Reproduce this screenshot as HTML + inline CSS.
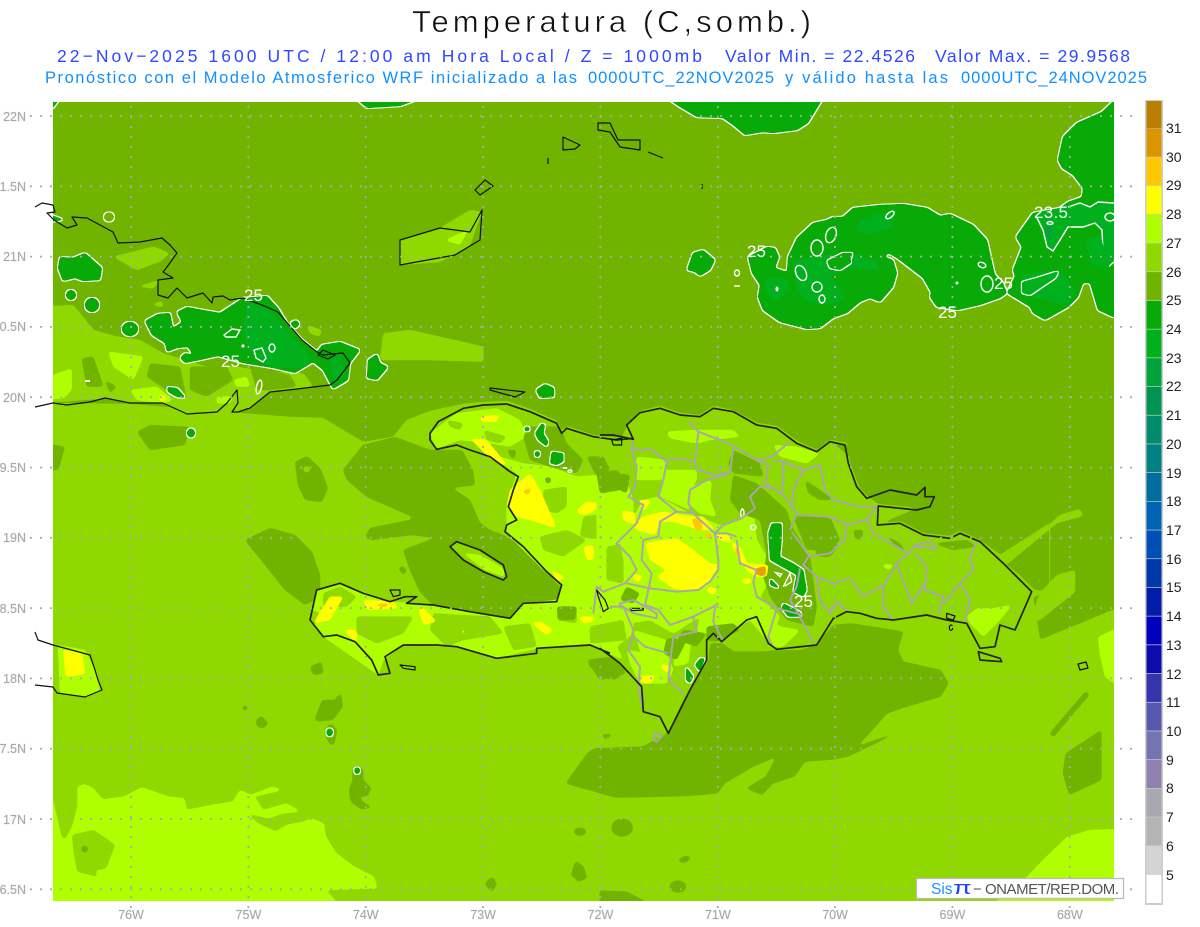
<!DOCTYPE html>
<html><head><meta charset="utf-8"><style>
html,body{margin:0;padding:0;background:#fff;width:1200px;height:927px;overflow:hidden}
svg{display:block;position:absolute;left:0;top:0}
text{font-family:"Liberation Sans",sans-serif}
.d{fill:#70b400}.l{fill:#8fd800}.b{fill:#b0ff00}.y{fill:#ffff00}.o{fill:#e8a000}.p{fill:#ffc800}
.g{fill:#08aa08}.h{fill:#00b01c}
.d,.l,.b,.y,.o,.p,.h{filter:url(#sm)}
.z .d,.z .l,.z .b,.z .y,.z .o,.z .p,.z .h{filter:url(#sz)}
.c{filter:url(#cs)}
.z .c{filter:url(#csz)}
.cn{fill:none;stroke:#fff;stroke-width:1.4;vector-effect:non-scaling-stroke}
.k{fill:none;stroke:#111;stroke-width:1.2;stroke-linejoin:round;vector-effect:non-scaling-stroke}
.k2{fill:none;stroke:#222;stroke-width:1.7;stroke-linejoin:round;vector-effect:non-scaling-stroke}
.v{fill:none;stroke:#a8a8a8;stroke-width:2;stroke-linejoin:round;vector-effect:non-scaling-stroke}
.gr{stroke:#aaa;stroke-width:1.8;stroke-dasharray:2 8;fill:none}
.ax{fill:#aaa;font-size:12.5px;stroke:#aaa;stroke-width:.2}
.cb{fill:#222;font-size:14px}
</style></head><body>
<svg width="1200" height="927" viewBox="0 0 1200 927" xmlns="http://www.w3.org/2000/svg">
<defs>
<clipPath id="m"><rect x="53" y="102" width="1061" height="799"/></clipPath>
<filter id="sm" x="-50%" y="-100%" width="200%" height="300%" color-interpolation-filters="sRGB">
<feGaussianBlur stdDeviation="1.6"/><feComponentTransfer><feFuncA type="linear" slope="9" intercept="-3.5"/></feComponentTransfer>
</filter>
<filter id="sz" x="-50%" y="-100%" width="200%" height="300%" color-interpolation-filters="sRGB">
<feGaussianBlur stdDeviation="4.8"/><feComponentTransfer><feFuncA type="linear" slope="9" intercept="-3.5"/></feComponentTransfer>
</filter>
<filter id="cs" x="-50%" y="-60%" width="200%" height="220%" color-interpolation-filters="sRGB">
<feGaussianBlur in="SourceGraphic" stdDeviation="1.3"/><feComponentTransfer result="sh"><feFuncA type="linear" slope="9" intercept="-3.5"/></feComponentTransfer>
<feMorphology in="sh" operator="dilate" radius="1" result="di"/>
<feFlood flood-color="#fff"/><feComposite in2="di" operator="in" result="w"/>
<feMerge><feMergeNode in="w"/><feMergeNode in="sh"/></feMerge>
</filter>
<filter id="csz" x="-50%" y="-60%" width="200%" height="220%" color-interpolation-filters="sRGB">
<feGaussianBlur in="SourceGraphic" stdDeviation="3"/><feComponentTransfer result="sh"><feFuncA type="linear" slope="9" intercept="-3.5"/></feComponentTransfer>
<feMorphology in="sh" operator="dilate" radius="3" result="di"/>
<feFlood flood-color="#fff"/><feComposite in2="di" operator="in" result="w"/>
<feMerge><feMergeNode in="w"/><feMergeNode in="sh"/></feMerge>
</filter>
</defs>

<text x="412" y="32" font-size="31" textLength="399" lengthAdjust="spacing" fill="#111" stroke="#fff" stroke-width=".5">Temperatura (C,somb.)</text>
<g font-size="17.5" fill="#3048ff">
<text x="57" y="62" textLength="645" lengthAdjust="spacing">22−Nov−2025 1600 UTC / 12:00 am Hora Local / Z = 1000mb</text>
<text x="725" y="62" textLength="190" lengthAdjust="spacing">Valor Min. = 22.4526</text>
<text x="935" y="62" textLength="195" lengthAdjust="spacing">Valor Max. = 29.9568</text>
</g>
<g font-size="16.5" fill="#1090ff">
<text x="45" y="83" textLength="532" lengthAdjust="spacing">Pronóstico con el Modelo Atmosferico WRF inicializado a las</text>
<text x="588" y="83" textLength="186" lengthAdjust="spacing">0000UTC_22NOV2025</text>
<text x="785" y="83" textLength="163" lengthAdjust="spacing">y válido hasta las</text>
<text x="961" y="83" textLength="186" lengthAdjust="spacing">0000UTC_24NOV2025</text>
</g>

<g clip-path="url(#m)">
<rect x="53" y="102" width="1061" height="799" fill="#70b400"/>

<!-- main light ocean -->
<polygon class="l" points="40,403 130,404 200,410 290,417 323,418 363,442 393,437 407,420 430,411 463,404 483,402 507,401 530,409 557,421 562,431 567,426 593,435 617,438 627,425 640,411 660,406 680,413 700,415 713,406 733,410 757,423 777,426 797,441 817,450 830,440 847,443 850,463 859,487 867,496 878,504 917,508 877,525 900,521 923,533 950,536 960,531 980,540 1000,555 1050,523 1050,590 1033,597 1040,640 1113,610 1130,605 1130,915 40,915"/>
<polygon class="d" points="1004,562 1030,543 1049,528 1049,590 1035,590 1020,575"/>
<polygon class="l" points="1000,557 1040,533 1060,515 1080,509 1083,516 1057,523 1040,537 1006,565"/>
<polygon class="l" points="1040,593 1057,575 1075,570 1075,592 1040,620 1030,622"/>
<polygon class="b" points="1098,637 1113,630 1125,625 1125,690 1105,677 1100,655"/>
<polygon class="b" points="1125,829 1090,830 1067,837 1043,860 1027,877 997,901 990,915 1125,915"/>

<!-- dark south -->
<g class="z" transform="translate(530 620) scale(.35714 .33333)">
<polygon class="d" points="505,70 540,70 570,95 660,95 680,92 760,90 800,75 850,15 900,10 1045,35 1030,90 1045,125 1150,150 1172,190 1150,230 1040,265 1000,280 950,340 915,380 1050,328 890,410 850,418 770,425 740,470 680,490 650,525 605,505 660,470 690,410 625,440 545,490 525,520 440,528 240,533 100,490 160,400 180,385 315,380 385,340 430,240 500,120"/>
<polygon class="d" points="160,130 200,115 240,130 270,150 240,178 200,175"/>
<polygon class="d" points="195,345 235,340 215,357"/>
<ellipse class="d" cx="258" cy="623" rx="30" ry="27"/>
<ellipse class="d" cx="140" cy="635" rx="17" ry="12"/>
<ellipse class="d" cx="433" cy="718" rx="17" ry="9" transform="rotate(-20 433 718)"/>
<polygon class="d" points="128,722 150,740 160,775 135,785 115,765"/>
<ellipse class="d" cx="414" cy="800" rx="23" ry="18"/>
<polygon class="d" points="195,812 270,815 320,842 320,870 195,870"/>
<polygon class="d" points="1455,340 1555,215 1568,222 1465,352"/>
<polygon class="d" points="1600,330 1500,400 1492,460 1510,525 1600,480"/>
</g>

<!-- Gulf dark -->
<polygon class="d" points="343,470 363,445 395,437 430,450 462,450 473,470 475,485 452,488 470,500 480,523 490,530 503,535 523,547 547,572 562,590 557,602 523,603 510,618 470,612 433,605 420,592 410,570 403,550 435,538 413,535 371,540 365,537 370,528 410,520 413,517 390,507 367,497 347,480"/>
<polygon class="l" points="450,547 457,542 480,550 503,565 507,577 503,580 483,572 463,560"/>
<polygon class="b" points="463,553 480,555 503,568 505,577 485,570"/>

<!-- other dark patches -->
<polygon class="d" points="295,462 307,456 320,468 328,488 322,502 305,500 298,485"/>
<polygon class="l" points="303,467 310,466 310,472 304,472"/>
<polygon class="d" points="137,432 150,425 190,427 185,445 150,450"/>
<polygon class="d" points="40,442 65,447 58,470 40,470"/>
<polygon class="d" points="245,540 270,528 295,535 312,552 320,575 320,597 305,605 285,590 265,565"/>
<polygon class="d" points="398,568 403,566 407,571 403,575"/>

<!-- SW region -->
<g class="z" transform="translate(40 680) scale(.35714 .33333)">
<polygon class="b" points="0,360 36,360 60,470 70,480 90,440 105,380 105,320 125,312 150,325 175,358 235,350 285,322 360,350 405,355 410,390 480,375 540,365 560,330 590,345 650,320 680,330 600,350 625,390 690,370 730,395 680,400 640,415 580,400 610,430 660,455 690,435 740,425 760,415 795,430 800,470 830,520 880,560 935,590 945,625 800,630 830,665 830,720 0,720"/>
<polygon class="l" points="90,465 150,450 210,495 185,565 155,570 160,590 105,575 95,520"/>
<circle class="d" cx="125" cy="507" r="10"/>
<polygon class="d" points="770,115 790,60 825,60 842,38 848,80 820,120 775,125"/>
<polygon class="d" points="605,120 620,108 640,130 622,147 605,135"/>
<ellipse class="d" cx="574" cy="84" rx="9" ry="7"/>
<polygon class="d" points="800,145 815,130 832,150 825,190 815,198 798,165"/>
<polygon class="d" points="875,270 890,255 905,270 905,300 928,325 915,350 890,350 915,375 938,380 900,388 870,365 865,330 875,300"/>
<polygon class="d" points="1245,610 1265,590 1280,610 1265,638"/>
<polygon class="d" points="1495,450 1525,450 1510,467"/>
<polygon class="d" points="1490,575 1500,540 1530,590 1515,605"/>
<ellipse class="g c" cx="811" cy="157" rx="9" ry="12"/>
<ellipse class="g c" cx="888" cy="272" rx="8" ry="10"/>
</g>
<path d="M1040,0" fill="none"/>

<!-- Cuba S band -->
<g class="z" transform="translate(30 190) scale(.33333)">
<polygon class="l" points="30,350 130,345 190,420 260,440 330,450 400,490 530,530 620,530 700,545 820,550 850,590 800,597 720,605 660,655 625,665 560,665 470,672 400,640 300,638 225,625 30,640"/>
<polygon class="d" points="155,505 190,500 220,590 170,590"/><polygon class="d" points="225,570 260,590 240,610"/>
<polygon class="d" points="480,530 590,530 610,570 530,620 480,600"/><polygon class="d" points="360,520 450,530 470,630 410,600 350,560"/>
<polygon class="d" points="660,530 780,555 800,590 720,600 680,600"/>
<polygon class="b" points="235,485 340,500 310,570 250,530"/><polygon class="b" points="30,570 125,535 125,600 100,625 30,630"/>
<polygon class="b" points="300,600 380,590 430,630 400,640 320,630"/><polygon class="b" points="610,570 650,560 660,590 620,590"/>
<polygon class="b" points="560,620 610,620 600,640 560,640"/>
<polygon class="y" points="388,612 408,620 404,636 388,630"/>
<polygon class="l" points="250,200 370,170 420,190 390,215 320,240"/>
<polygon class="l" points="320,290 390,270 370,295"/>
<polygon class="l" points="365,345 395,332 402,352"/>
<polygon class="l" points="830,405 875,420 870,440 840,430"/>
<polygon class="l" points="1060,430 1140,420 1360,470 1360,515 1190,510 1050,510"/>
</g>

<polygon class="l" points="400,240 440,228 470,210 482,212 470,245 440,262 400,265"/>
<polygon class="b" points="445,240 468,230 460,245"/>

<!-- Jamaica -->
<polygon class="b" points="58,645 85,650 95,670 100,690 85,697 60,693"/>
<polygon class="y" points="63,650 82,652 85,674 66,677"/>

<!-- Green top -->
<polygon class="g c" points="40,90 66,90 53,108 40,110"/>
<polygon class="g c" points="352,95 367,108 400,106 430,95"/>
<polygon class="g c" points="655,90 680,107 697,117 723,118 733,125 745,135 763,132 773,133 797,130 808,123 828,90"/>
<polygon class="g c" points="748,257 767,247 775,248 779,257 775,268 787,272 788,257 797,238 813,223 827,220 833,217 843,217 853,208 880,205 903,204 927,208 940,216 950,214 973,225 987,240 993,267 995,275 1003,283 1007,293 1000,298 980,305 958,310 937,307 930,297 931,292 923,278 910,268 897,258 888,253 885,257 893,260 897,273 893,287 880,302 870,298 860,302 847,313 833,318 820,328 807,329 780,322 763,310 758,297 760,285 752,273"/>
<polygon class="h" points="858,222 885,212 895,215 890,228 868,235 858,230"/>
<polygon class="h" points="765,280 785,277 790,290 775,302 765,292"/>
<polygon class="h" points="795,262 820,255 850,255 875,262 880,270 850,268 830,275 845,300 823,305 805,300 795,285"/>
<polygon class="g c" points="1130,85 1102,112 1077,123 1063,137 1058,160 1062,168 1073,175 1083,188 1082,197 1068,202 1060,208 1033,213 1023,227 1016,237 1022,247 1013,270 1015,276 1007,293 1030,307 1033,313 1045,320 1068,307 1078,297 1083,283 1090,283 1098,310 1113,317 1130,318"/>
<polygon class="h" points="1033,213 1068,207 1080,203 1090,207 1098,202 1125,203 1125,255 1107,268 1100,265 1103,253 1102,230 1095,223 1083,227 1068,227 1060,240 1053,251 1047,247 1043,230"/>
<polyline class="cn" points="1068,207 1080,203 1090,207 1098,202 1114,203"/>
<polyline class="cn" points="1036,216 1043,230 1047,247 1053,251 1060,240 1068,227 1083,227 1095,223 1102,230 1103,253 1100,265 1107,268 1114,262"/>
<polygon class="h" points="1020,275 1060,270 1075,290 1068,305 1030,296"/>
<polygon class="h" points="1085,240 1100,235 1110,270 1092,265"/>
<polygon fill="#08a040" points="1045,228 1052,225 1052,238 1047,238"/>

<!-- West blobs -->
<polygon class="g c" points="60,257 73,258 85,253 102,268 100,280 83,281 75,278 63,281 58,268"/>
<circle class="g c" cx="71" cy="295" r="5"/>
<ellipse class="g c" cx="92" cy="305" rx="7" ry="7"/>
<ellipse class="g c" cx="130" cy="329" rx="8" ry="7"/>
<ellipse class="d c" cx="109" cy="217" rx="5" ry="4.5"/>
<polygon class="g c" points="45,213 65,220 45,222"/>
<polygon class="g c" points="145,321 158,314 170,313 173,328 182,322 177,312 187,307 203,310 220,313 243,298 267,296 278,308 287,323 293,330 302,340 317,352 322,345 340,342 360,350 350,363 348,380 333,389 323,370 313,362 295,373 273,368 243,363 218,356 200,360 185,363 180,358 185,353 193,355 188,347 177,348 167,352 165,343 152,335 148,327"/>
<polygon class="h" points="247,303 270,310 283,327 310,357 307,367 270,367 250,353 243,333"/>
<polygon class="h" points="330,360 340,355 345,375 335,385"/>
<polygon class="g c" points="368,360 377,354 380,363 388,367 377,380 367,378"/>
<polygon class="g c" points="290,323 296,320 300,324 295,329"/>
<polygon class="cn" points="224,335 232,329 240,330 236,337 226,337"/>
<polygon class="cn" points="254,350 262,348 266,358 263,362 256,358"/>
<ellipse class="cn" cx="272" cy="348" rx="3" ry="4"/>
<circle cx="243" cy="346" r="1.6" fill="#fff"/>
<polygon class="g c" points="167,387 177,388 186,398 177,397 168,392"/>
<ellipse class="cn" cx="259" cy="387" rx="2.5" ry="7" transform="rotate(12 259 387)"/>
<rect x="85" y="380" width="5" height="2" fill="#fff"/>
<ellipse class="g c" cx="191" cy="433" rx="4" ry="4.5"/>
<polygon class="g c" points="536,390 545,384 554,388 554,397 540,398"/>

<!-- East little -->
<polygon class="g c" points="687,270 693,253 703,250 715,260 710,270 700,276 695,272"/>
<ellipse class="cn" cx="737" cy="273" rx="2.5" ry="3"/>
<path class="cn" d="M734,286h6"/>
<ellipse class="cn" cx="890" cy="215" rx="5" ry="2.5" transform="rotate(-40 890 215)"/>
<ellipse class="cn" cx="831" cy="235" rx="5" ry="8" transform="rotate(20 831 235)"/>
<ellipse class="cn" cx="817" cy="248" rx="6" ry="8"/>
<polygon class="g c" points="827,261 843,253 853,253 850,260 852,262 840,270 830,268"/>
<ellipse class="cn" cx="801" cy="273" rx="5" ry="8" transform="rotate(-25 801 273)"/>
<ellipse class="cn" cx="817" cy="287" rx="5" ry="5" transform="rotate(30 817 287)"/>
<ellipse class="cn" cx="822" cy="299" rx="3" ry="4"/>
<ellipse cx="777" cy="289" rx="1.5" ry="2.5" fill="#fff"/>
<circle cx="957" cy="283" r="1.5" fill="#fff"/>
<ellipse class="cn" cx="982" cy="265" rx="4" ry="2.5" transform="rotate(20 982 265)"/>
<ellipse class="cn" cx="987" cy="284" rx="6" ry="8"/>
<polygon class="h c" style="fill:#00b01c" points="1022,282 1037,278 1059,271 1055,278 1040,288 1030,295 1022,293"/>
<ellipse class="cn" cx="1050" cy="223" rx="3" ry="1.5"/>
<ellipse class="cn" cx="1110" cy="217" rx="5" ry="4"/>

<!-- HAITI LAND -->
<g class="z" transform="translate(290 400) scale(.33333)">
<polygon class="b" points="420,100 500,40 620,25 690,60 710,110 660,140 600,130 510,120 440,145"/>
<polygon class="b" points="590,160 700,190 780,200 860,230 1000,220 1030,300 1030,700 980,740 1000,780 900,735 740,745 620,775 500,740 340,735 280,780 265,825 100,710 60,660 80,570 150,550 300,605 440,615 660,655 700,610 800,600 815,555 760,510 650,400 650,320 680,220"/>
<polygon class="l" points="470,60 520,70 510,90 480,80"/>
<polygon class="l" points="580,90 650,110 630,130 590,120"/>
<polygon class="l" points="200,650 370,650 340,700 260,730 200,700"/>
<polygon class="l" points="430,640 600,650 640,700 520,720 470,740 420,690"/>
<polygon class="l" points="640,680 720,670 740,740 670,750"/>
<polygon class="l" points="810,620 860,620 860,670 800,660"/>
<polygon class="l" points="900,680 1000,660 1010,720 900,730"/>
<polygon class="l" points="750,410 830,390 890,420 820,470 760,450"/>
<polygon class="l" points="760,270 830,260 830,320 800,340 760,330"/>
<polygon class="l" points="880,350 960,340 950,420 870,410"/>
<polygon class="l" points="950,440 1000,430 1000,550 950,540"/>
<polygon class="l" points="100,580 150,560 200,590 170,620 100,620"/>
<polygon class="l" points="40,620 90,640 70,680"/>
<polygon class="d" points="890,780 970,770 1010,820 930,840"/>
<polygon class="d" points="60,800 95,785 100,820 70,825"/>
<polygon class="d" points="720,80 810,80 830,130 880,180 860,220 780,200 720,180 700,110"/>
<polygon class="d" points="890,170 940,170 960,210 920,230"/>
<polygon class="d" points="980,220 1020,225 1010,280 970,260"/>
<polygon class="d" points="800,620 860,620 855,660 805,660"/>
<polygon class="d" points="650,150 680,150 670,180"/>
<polygon class="d" points="765,230 785,235 780,250 768,250"/>
<polygon class="y" points="660,270 720,220 750,270 800,385 720,360 680,350 650,320"/>
<polygon class="y" points="540,115 590,120 655,200 600,175"/>
<polygon class="y" points="570,50 630,45 620,65 575,65"/>
<polygon class="y" points="645,90 670,100 660,105"/>
<polygon class="y" points="860,330 890,305 940,310 900,340 870,345"/>
<polygon class="y" points="880,440 910,435 910,480 890,480"/>
<polygon class="y" points="780,510 825,530 805,545"/>
<polygon class="y" points="70,670 120,590 160,590 120,660"/>
<polygon class="y" points="160,690 200,690 200,730"/>
<polygon class="y" points="385,625 400,625 440,665 400,675"/>
<polygon class="y" points="725,670 750,665 790,690 770,705"/>
<polygon class="y" points="865,650 915,650 910,665 880,670"/>
<polygon class="y" points="510,690 525,690 525,705"/>
<polygon class="y" points="705,700 725,715 720,720"/>
<polygon class="y" points="220,600 310,605 325,625 230,630"/>
<polygon class="y" points="995,330 1040,340 1040,375 1010,365"/>
<polygon class="p" points="240,612 300,610 285,622"/>
<polygon class="p" points="695,275 725,262 715,285"/>
<polygon class="g c" points="735,100 755,70 765,75 760,100 775,125 770,140 745,120"/>
<polygon class="g c" points="785,155 820,160 820,185 800,195 780,190"/>
<ellipse class="g c" cx="742" cy="162" rx="8" ry="9"/>
<ellipse class="g c" cx="711" cy="87" rx="8" ry="7"/>
</g>
<ellipse fill="#fff" cx="565" cy="468" rx="2.5" ry="1"/>
<ellipse class="cn" cx="570" cy="471" rx="2" ry="1.2"/>

<!-- DR LAND -->
<g class="z" transform="translate(600 400) scale(.33333)">
<polygon class="d" points="-10,220 50,210 85,250 60,270 0,280"/>
<polygon class="b" points="130,300 175,290 270,340 370,380 430,350 460,330 470,420 500,470 510,540 480,590 540,650 520,700 500,720 450,660 400,690 360,725 330,700 290,700 300,650 220,700 150,660 90,670 50,600 80,520 60,430 100,350"/>
<polygon class="b" points="200,95 290,90 400,90 420,110 330,120 290,130 210,115"/>
<polygon class="b" points="520,135 590,140 660,160 620,190 540,170"/>
<polygon class="b" points="110,170 200,180 185,240 105,240"/>
<polygon class="b" points="190,210 290,210 290,240 265,280 270,330 180,290"/>
<polygon class="b" points="270,260 335,240 330,300 350,350 300,340 265,310"/>
<polygon class="b" points="80,750 205,770 220,810 200,850 120,850 90,790"/>
<polygon class="b" points="1100,650 1130,625 1180,625 1235,615 1200,660 1150,710 1110,670"/>
<polygon class="b" points="500,650 540,680 600,690 550,740 510,740"/>
<polygon class="b" points="-10,290 50,290 90,340 60,420 -10,430"/>
<polygon class="b" points="100,690 200,720 210,770 130,780"/>
<polygon class="b" points="235,700 275,710 265,790 220,800"/>

<polygon class="d" points="400,225 470,250 560,330 575,380 630,470 650,620 640,680 560,660 510,590 490,530 500,460 480,360 420,340 390,300"/>
<polygon class="d" points="580,350 690,350 720,420 690,450 620,450"/>
<polygon class="d" points="400,150 480,190 490,230 400,220 385,190"/>
<polygon class="d" points="60,30 90,60 60,120 30,80"/>
<polygon class="d" points="320,680 400,670 420,690 350,725 320,720"/>
<polygon class="d" points="615,240 660,270 700,300 660,300 625,280"/>
<polygon class="d" points="640,400 690,410 715,440 690,470 650,470"/>
<polygon class="d" points="820,150 830,200 775,220 750,170 700,130"/>
<polygon class="d" points="760,390 790,390 785,420 765,415"/>
<polygon class="d" points="850,400 900,430 925,460 880,430"/>
<polygon class="d" points="250,690 320,700 290,740 230,720"/>
<polygon class="d" points="1000,430 1100,420 1130,440 1060,450"/>
<polygon class="d" points="80,560 120,580 100,610 60,600"/>
<polygon class="d" points="200,715 260,720 230,780 190,760"/>
<polygon class="b" points="850,493 878,493 874,507 852,505"/>

<polygon class="y" points="135,430 190,420 230,415 280,450 330,490 360,495 340,520 320,560 265,575 220,565 170,530 200,510 150,480"/>
<polygon class="y" points="100,375 130,350 190,335 240,345 280,350 310,350 345,390 300,390 220,365 180,365 165,405 110,390"/>
<polygon class="y" points="390,420 420,440 440,490 505,495 500,530 465,530 440,510 410,465"/>
<polygon class="y" points="115,300 155,300 130,335"/>
<polygon class="y" points="65,330 105,340 105,375 70,360"/>
<polygon class="y" points="120,830 165,825 155,850 125,850"/>
<polygon class="y" points="180,790 210,800 205,820 190,810"/>
<polygon class="y" points="345,400 385,405 395,430 360,420"/>
<polygon class="y" points="100,520 130,530 115,545 100,540"/>
<polygon class="y" points="325,560 350,565 345,585 320,575"/>
<polygon class="y" points="425,535 455,535 450,552 430,552"/>
<polygon class="p" points="275,355 302,355 308,390 288,393"/>
<polygon class="p" points="308,396 338,402 325,418"/>
<polygon class="o" points="462,508 497,497 497,527 475,527"/>
<polygon class="p" points="400,420 423,468 410,468"/>

<polygon class="g c" points="515,370 545,370 545,420 540,470 580,490 610,510 620,570 610,590 580,575 590,525 545,500 510,480 505,400"/>
<polygon class="g c" points="510,535 535,560 535,565 510,555"/>
<polygon class="g c" points="550,610 580,625 605,640 600,650 565,650 545,625"/>
<polygon class="g c" points="300,775 315,775 300,815 285,795"/>
<polygon class="g c" points="258,800 280,830 270,850 258,840"/>
<path class="cn" d="M550,560 L570,520 575,545 555,558"/>
<path class="cn" d="M527,518 L545,522 540,530Z"/>
<ellipse class="cn" cx="427" cy="340" rx="5" ry="13"/>
<ellipse class="cn" cx="460" cy="382" rx="8" ry="7"/>
</g>

<!-- small contours in south -->
<polygon class="k" points="490,388 525,392 515,397 490,390"/>
</g>

<!-- COASTS -->
<polyline class="k" points="35,207 42,203 53,205 55,212 47,213 54,220 67,228 77,225 72,217 87,218 113,232 118,243 140,242 162,238 170,245 177,253 167,267 163,272 173,278 158,280 158,295 168,298 177,288 187,298 203,293 212,303 213,297 223,296 230,300 243,298 262,305 278,312 302,340 317,352 323,355 343,353 350,363 337,380 330,385 297,389 270,392 250,408 238,412 232,412 238,403 237,390 227,403 217,412 187,414 163,403 130,403 105,398 90,402 67,405 53,403 35,407"/>
<polygon class="k" points="323,350 335,355 328,359 318,355"/>
<polygon class="k" points="400,240 440,228 470,232 482,210 480,240 455,255 400,265"/>
<polygon class="k" points="475,190 485,180 493,186 480,195"/>
<polygon class="k" points="563,137 580,145 575,149 563,150"/>
<polygon class="k" points="598,123 610,123 618,140 640,140 640,150 620,147 610,132 598,130"/>
<path class="k" d="M648,152l15,6M548,158v6M702,184v5"/>
<polyline class="k" points="35,632 38,640 53,645 90,655 95,670 98,680 102,690 85,697 57,693 53,687 35,685"/>
<polygon class="k" points="1078,664 1086,662 1088,668 1080,670"/>
<g transform="translate(290 400) scale(.33333)">
<polyline class="k2" points="420,120 420,100 445,65 520,25 580,15 650,12 720,35 800,70 815,100 830,85 910,110 980,120 1030,115"/>
<polygon class="k2" points="480,440 500,425 570,450 640,495 650,530 640,540 580,515 520,480"/>
<polygon class="k" points="300,570 330,570 330,585 310,590"/>
<polygon class="k" points="330,795 375,800 375,810 340,805"/>
<polyline class="k2" points="960,760 900,735 740,745 740,760 660,770 620,775 500,740 440,735 380,735 340,735 285,770 300,820 265,825 245,780 195,725 140,705 100,710 60,660 80,570 150,550 220,580 300,605 345,590 380,590 350,610 430,615 540,635 660,655 700,610 800,605 815,555 770,515 700,440 645,395 650,375 680,360 655,320 670,270 685,230 660,215 600,170 540,150 500,135 440,148 420,120"/>
</g>
<g transform="translate(600 400) scale(.33333)">
<polyline class="v" points="100,118 95,150 110,200 105,260 85,290 130,315 110,370 50,430 90,470 110,510 75,550 10,575 -10,560 -20,640"/>
<polyline class="v" points="30,620 70,620 100,690 85,750 120,800 115,860 130,930"/>
<polyline class="v" points="90,145 130,150 150,145 200,185 190,240 175,290 230,335 280,340"/>
<polyline class="v" points="200,180 240,175 285,185 295,95 265,65"/>
<polyline class="v" points="295,95 385,130 440,160 470,180 515,170 570,125"/>
<polyline class="v" points="285,185 290,210 350,225 390,215 400,145"/>
<polyline class="v" points="390,220 320,240 270,270 265,310 280,340 300,360 345,400 370,375 425,355 465,325 450,290 480,260 520,265 550,285 590,340 570,390"/>
<polyline class="v" points="470,180 505,195 495,250 520,265"/>
<polyline class="v" points="520,180 550,185 550,240 545,280"/>
<polyline class="v" points="550,185 610,210 580,270 575,320 590,340"/>
<polyline class="v" points="610,210 660,195 675,270 700,300 780,320 830,320"/>
<polyline class="v" points="590,345 680,350 740,370 735,420 690,460 630,470 575,395"/>
<polyline class="v" points="740,375 800,360 830,320"/>
<polyline class="v" points="800,360 820,400 925,460"/>
<polyline class="v" points="925,460 890,490 850,560 850,620 875,655"/>
<polyline class="v" points="925,460 945,435 990,425 1010,445 945,440"/>
<polyline class="v" points="945,460 980,500 975,570 1030,590 1015,640"/>
<polyline class="v" points="890,490 935,610 975,550"/>
<polyline class="v" points="1130,425 1110,470 1120,510 1080,550 1110,600 1095,665"/>
<polyline class="v" points="1080,550 1030,610"/>
<polyline class="v" points="625,470 610,495 650,530 700,550 750,535 790,590 850,555"/>
<polyline class="v" points="650,530 660,600 690,640 710,605 740,630"/>
<polyline class="v" points="600,505 590,560 570,600 600,650 640,730"/>
<polyline class="v" points="410,410 380,400 345,400 355,480 355,510 330,545 295,570 230,575 150,565 80,550"/>
<polyline class="v" points="230,335 180,365 175,410 130,420 125,480 155,520 145,570 135,615 175,630 210,675 280,650 340,620 355,610"/>
<polyline class="v" points="410,420 420,490 470,510 460,545 470,590 530,625 505,710 520,745"/>
<polyline class="v" points="470,590 530,625 610,645"/>
<polyline class="v" points="345,620 340,665 370,725"/>
<polyline class="v" points="280,650 290,695 220,710 210,790 205,840 250,880"/>
<polyline class="v" points="100,710 135,740 205,760"/>
<polygon class="v" points="60,610 100,600 170,640 170,655 100,640 60,615"/>
<polygon class="v" points="165,1000 180,1000 185,1010 170,1025 160,1020"/>
<polygon class="k" points="90,625 130,625 130,630 95,632"/>
<polygon class="k" points="-10,570 15,600 25,625 10,635 -5,590"/>
<polygon class="k" points="35,120 65,115 65,135 40,135"/>
<polyline class="k2" points="0,105 40,105 100,118 80,75 120,38 180,25 240,45 300,50 340,25 400,35 470,75 530,85 590,130 650,155 690,125 735,135 745,190 770,260 800,295 870,270 950,285 975,262 975,290 1003,290 990,320 950,330 835,318 832,375 900,370 970,405 1050,415 1080,400 1140,425 1210,490 1295,575 1280,610 1245,690 1200,675 1185,740 1140,745 1100,670 1040,660 980,645 880,660 830,655 780,640 740,635 700,655 650,735 530,748 505,730 470,650 440,660 400,695 365,725 340,700 320,720 320,780 270,870 205,1000 180,950 130,935 125,860 60,790 0,745"/>
<polygon class="k2" points="1135,755 1200,775 1205,785 1140,780"/>
<polygon class="k" points="1040,640 1065,648 1060,660 1040,655"/>
<ellipse class="k" cx="1053" cy="683" rx="5" ry="8"/>
</g>

<!-- GRID -->
<g class="gr">
<path d="M30,116H1136M30,186.3H1136M30,256.6H1136M30,326.9H1136M30,397.2H1136M30,467.5H1136M30,537.8H1136M30,608.1H1136M30,678.4H1136M30,748.7H1136M30,819H1136M30,889.3H1136"/>
<path d="M131,106V910M248.4,106V910M365.7,106V910M483.1,106V910M600.4,106V910M717.8,106V910M835.1,106V910M952.4,106V910M1069.8,106V910"/>
</g>

<!-- Labels 25 -->
<g fill="#fff" font-size="17">
<text x="244" y="301">25</text>
<text x="221" y="367">25</text>
<text x="747" y="257">25</text>
<text x="994" y="289">25</text>
<text x="938" y="318">25</text>
<text x="794" y="607">25</text>
<text x="1034" y="218" textLength="34">23.5</text>
</g>

<!-- Axis labels -->
<g class="ax" text-anchor="end">
<text x="26" y="121">22N</text><text x="26" y="191">1.5N</text><text x="26" y="261">21N</text><text x="26" y="331">0.5N</text>
<text x="26" y="402">20N</text><text x="26" y="472">9.5N</text><text x="26" y="542">19N</text><text x="26" y="613">8.5N</text>
<text x="26" y="683">18N</text><text x="26" y="753">7.5N</text><text x="26" y="824">17N</text><text x="26" y="894">6.5N</text>
</g>
<g class="ax" text-anchor="middle">
<text x="131" y="919">76W</text><text x="248.4" y="919">75W</text><text x="365.7" y="919">74W</text><text x="483.1" y="919">73W</text>
<text x="600.4" y="919">72W</text><text x="717.8" y="919">71W</text><text x="835.1" y="919">70W</text><text x="952.4" y="919">69W</text><text x="1069.8" y="919">68W</text>
</g>

<!-- Logo -->
<rect x="916.5" y="878.5" width="207" height="20" fill="#fff" stroke="#bbb" stroke-width="1.3"/>
<text x="931" y="894" font-size="15.5" fill="#2090ff">Sis</text>
<text transform="translate(953 894) scale(1.5 1)" font-size="18" fill="#2040ff" font-family="DejaVu Sans">π</text>
<text x="973" y="894" font-size="15" fill="#555" textLength="146" lengthAdjust="spacing">− ONAMET/REP.DOM.</text>

<!-- Color bar -->
<rect x="1145" y="100" width="18" height="805" fill="#ccc"/>
<g>
<rect x="1146.5" y="101" width="15" height="27.5" fill="#bc7e00"/>
<rect x="1146.5" y="129" width="15" height="27.7" fill="#dc9400"/>
<rect x="1146.5" y="157.3" width="15" height="28" fill="#ffc800"/>
<rect x="1146.5" y="186" width="15" height="28" fill="#ffff00"/>
<rect x="1146.5" y="214.7" width="15" height="28" fill="#b0ff00"/>
<rect x="1146.5" y="243.4" width="15" height="28" fill="#8fd800"/>
<rect x="1146.5" y="272.1" width="15" height="28" fill="#70b400"/>
<rect x="1146.5" y="300.8" width="15" height="28" fill="#08aa08"/>
<rect x="1146.5" y="329.5" width="15" height="28" fill="#00b01c"/>
<rect x="1146.5" y="358.2" width="15" height="28" fill="#00a43c"/>
<rect x="1146.5" y="386.9" width="15" height="28" fill="#009450"/>
<rect x="1146.5" y="415.6" width="15" height="28" fill="#008c6c"/>
<rect x="1146.5" y="444.3" width="15" height="28" fill="#008080"/>
<rect x="1146.5" y="473" width="15" height="28" fill="#006e9c"/>
<rect x="1146.5" y="501.7" width="15" height="28" fill="#0064b4"/>
<rect x="1146.5" y="530.4" width="15" height="28" fill="#0050b4"/>
<rect x="1146.5" y="559.1" width="15" height="28" fill="#0038ac"/>
<rect x="1146.5" y="587.8" width="15" height="28" fill="#001ca8"/>
<rect x="1146.5" y="616.5" width="15" height="28" fill="#0000bc"/>
<rect x="1146.5" y="645.2" width="15" height="28" fill="#0c0cac"/>
<rect x="1146.5" y="673.9" width="15" height="28" fill="#3434ac"/>
<rect x="1146.5" y="702.6" width="15" height="28" fill="#5858b0"/>
<rect x="1146.5" y="731.3" width="15" height="28" fill="#7474b0"/>
<rect x="1146.5" y="760" width="15" height="28" fill="#9080b0"/>
<rect x="1146.5" y="788.7" width="15" height="28" fill="#a8a8b0"/>
<rect x="1146.5" y="817.4" width="15" height="28" fill="#b4b4b4"/>
<rect x="1146.5" y="846.1" width="15" height="28" fill="#d4d4d4"/>
<rect x="1146.5" y="874.8" width="15" height="28.2" fill="#fff"/>
</g>
<g class="cb">
<text x="1166" y="133">31</text><text x="1166" y="162">30</text><text x="1166" y="190">29</text><text x="1166" y="219">28</text><text x="1166" y="248">27</text>
<text x="1166" y="277">26</text><text x="1166" y="305">25</text><text x="1166" y="334">24</text><text x="1166" y="363">23</text><text x="1166" y="391">22</text>
<text x="1166" y="420">21</text><text x="1166" y="449">20</text><text x="1166" y="478">19</text><text x="1166" y="506">18</text><text x="1166" y="535">17</text>
<text x="1166" y="564">16</text><text x="1166" y="592">15</text><text x="1166" y="621">14</text><text x="1166" y="650">13</text><text x="1166" y="679">12</text>
<text x="1166" y="707">11</text><text x="1166" y="736">10</text><text x="1166" y="765">9</text><text x="1166" y="793">8</text><text x="1166" y="822">7</text>
<text x="1166" y="851">6</text><text x="1166" y="880">5</text>
</g>
</svg>
</body></html>
